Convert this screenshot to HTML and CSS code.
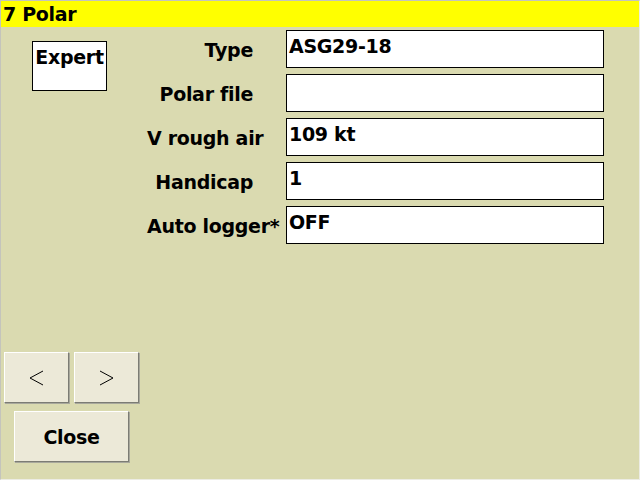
FILE: index.html
```html
<!DOCTYPE html>
<html>
<head>
<meta charset="utf-8">
<link rel="stylesheet" href="styles.css">
</head>
<body>
<div class="frame">
  <div class="title">7 Polar</div>
  <div class="main">
    <div class="side">
      <div class="expert">Expert</div>
    </div>
    <div class="form">
      <div class="label">Type</div><div class="field">ASG29-18</div>
      <div class="label">Polar file</div><div class="field"></div>
      <div class="label">V rough air</div><div class="field">109 kt</div>
      <div class="label">Handicap</div><div class="field">1</div>
      <div class="label">Auto logger*</div><div class="field">OFF</div>
    </div>
  </div>
  <div class="footer">
    <div class="nav">
      <div class="btn nbtn"><svg width="15" height="16" viewBox="0 0 15 16"><polyline points="14,1 1,8 14,15" fill="none" stroke="#000" stroke-width="1"/></svg></div>
      <div class="btn nbtn"><svg width="15" height="16" viewBox="0 0 15 16"><polyline points="1,1 14,8 1,15" fill="none" stroke="#000" stroke-width="1"/></svg></div>
    </div>
    <div class="btn close">Close</div>
  </div>
</div>
</body>
</html>
```
FILE: styles.css
```css
html, body {
  margin: 0;
  padding: 0;
}
body {
  width: 640px;
  height: 480px;
  overflow: hidden;
  font-family: "DejaVu Sans", sans-serif;
  font-weight: bold;
  font-size: 19px;
  letter-spacing: -0.3px;
  color: #000;
}
.frame {
  box-sizing: border-box;
  width: 640px;
  height: 480px;
  border: 1px solid #c4c4bc;
  border-right-color: #ecece4;
  border-bottom-color: #ecece4;
  background: #dadab0;
  display: flex;
  flex-direction: column;
}
.title {
  height: 26px;
  background: #ffff00;
  padding-left: 2px;
  line-height: 26px;
  white-space: nowrap;
}
.main {
  flex: 1;
  display: flex;
  padding-top: 3px;
}
.side {
  width: 146px;
}
.expert {
  box-sizing: border-box;
  width: 75px;
  height: 50px;
  margin: 11px 0 0 31px;
  background: #fff;
  border: 1px solid #000;
  text-align: center;
  padding-top: 4px;
  line-height: 22px;
}
.form {
  display: grid;
  grid-template-columns: 106px 318px;
  grid-auto-rows: 38px;
  column-gap: 33px;
  row-gap: 6px;
  align-content: start;
}
.label {
  text-align: right;
  white-space: nowrap;
  align-self: center;
  line-height: 22px;
  padding-top: 2px;
}
.field {
  box-sizing: border-box;
  background: #fff;
  border: 1px solid #000;
  padding: 4px 0 0 2px;
  line-height: 22px;
  white-space: nowrap;
}
.footer {
  display: flex;
  flex-direction: column;
  padding: 0 0 17px 3px;
  gap: 8px;
}
.nav {
  display: flex;
  gap: 5px;
}
.btn {
  box-sizing: border-box;
  background: #ece9d8;
  border: 1px solid #fff;
  border-right-color: #7c7c74;
  border-bottom-color: #7c7c74;
  box-shadow: 1px 1px 0 #a8a89c;
  display: flex;
  align-items: center;
  justify-content: center;
}
.nbtn {
  width: 65px;
  height: 51px;
}
.nbtn svg {
  display: block;
}
.close {
  width: 115px;
  height: 51px;
  margin-left: 10px;
  line-height: 22px;
}
```
